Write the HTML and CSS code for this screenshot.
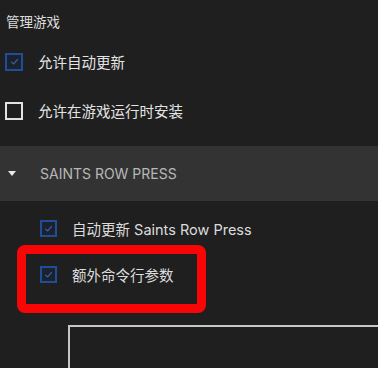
FILE: index.html
```html
<!DOCTYPE html>
<html lang="zh-CN">
<head>
    <meta charset="UTF-8">
    <meta name="viewport" content="width=device-width, initial-scale=1.0">
    <title>管理游戏</title>
    <link rel="stylesheet" href="styles.css">
</head>
<body>
    <div class="title">管理游戏</div>

    <label class="option">
        <span class="check checked">
            <svg viewBox="0 0 16 16"><path d="M4 8.5 L7 11 L12 5"/></svg>
        </span>
        允许自动更新
    </label>
    <label class="option">
        <span class="check"></span>
        允许在游戏运行时安装
    </label>

    <div class="group-head">
        <span class="caret"></span>
        <span class="group-name">Saints Row Press</span>
    </div>

    <label class="option sub">
        <span class="check checked small">
            <svg viewBox="0 0 16 16"><path d="M4 8.5 L7 11 L12 5"/></svg>
        </span>
        自动更新 Saints Row Press
    </label>
    <div class="highlight">
        <label class="option inner">
            <span class="check checked small">
                <svg viewBox="0 0 16 16"><path d="M4 8.5 L7 11 L12 5"/></svg>
            </span>
            额外命令行参数
        </label>
    </div>

    <div class="args"></div>
</body>
</html>
```

FILE: styles.css
```css
html, body {
    height: 100%;
}

body {
    font-family: Inter, "Noto Sans CJK SC", sans-serif;
    background-color: #1f1f1f;
    color: #e4e4e4;
    margin: 0;
    overflow: hidden;
}

.title {
    height: 37px;
    padding: 4px 0 0 6px;
    box-sizing: border-box;
    display: flex;
    align-items: center;
    font-size: 13.5px;
    color: #dcdcdc;
}

.option {
    display: flex;
    align-items: center;
    gap: 15px;
    height: 49px;
    padding-left: 5px;
    font-size: 14.5px;
}

.check {
    width: 18px;
    height: 18px;
    box-sizing: border-box;
    border: 2px solid #e2e2e2;
    display: flex;
    align-items: center;
    justify-content: center;
    flex-shrink: 0;
}

.check.checked {
    border-color: #1f4d96;
    background: #1c2130;
}

.check.small {
    width: 17px;
    height: 17px;
}

.check svg {
    width: 13px;
    height: 13px;
    fill: none;
    stroke: #3d5f95;
    stroke-width: 1.6;
}

.group-head {
    margin-top: 11px;
    height: 55px;
    background: #333333;
    display: flex;
    align-items: center;
    gap: 24px;
    padding-left: 8px;
}

.caret {
    width: 0;
    height: 0;
    border-left: 4px solid transparent;
    border-right: 4px solid transparent;
    border-top: 5px solid #e8e8e8;
}

.group-name {
    text-transform: uppercase;
    font-size: 14px;
    color: #b8b8b8;
}

.option.sub {
    margin-top: 10px;
    height: 34px;
    padding-left: 40px;
    gap: 15px;
    color: #dcdcdc;
}

.highlight {
    margin-left: 17px;
    width: 189px;
    height: 68px;
    box-sizing: border-box;
    border: 9px solid #f80606;
    border-radius: 8px;
    padding: 12px 0 0 14px;
}

.option.inner {
    height: 17px;
    padding-left: 0;
    gap: 15px;
    color: #dcdcdc;
}

.args {
    margin: 12px 0 0 68px;
    height: 42px;
    border: 2px solid #c6c6c6;
    border-right: none;
    border-bottom: none;
}
```
